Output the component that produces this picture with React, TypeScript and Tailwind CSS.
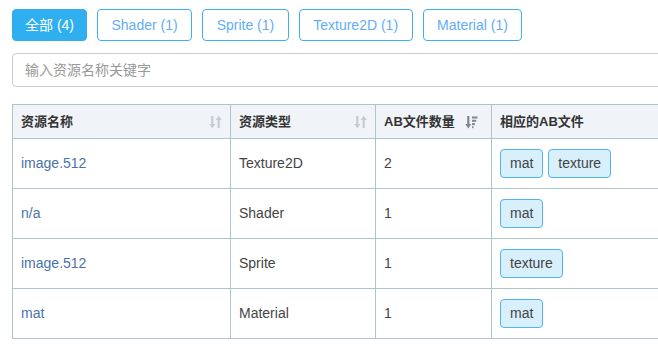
import React from "react";

const filters = [
  { label: "全部 (4)", active: true },
  { label: "Shader (1)" },
  { label: "Sprite (1)" },
  { label: "Texture2D (1)" },
  { label: "Material (1)" },
];

const rows = [
  { name: "image.512", type: "Texture2D", count: 2, files: ["mat", "texture"] },
  { name: "n/a", type: "Shader", count: 1, files: ["mat"] },
  { name: "image.512", type: "Sprite", count: 1, files: ["texture"] },
  { name: "mat", type: "Material", count: 1, files: ["mat"] },
];

function SortBoth() {
  return (
    <svg width="13" height="14" viewBox="0 0 13 14" className="text-[#c5ccd3]">
      {/* down arrow */}
      <rect x="2.2" y="1" width="2.2" height="9" fill="currentColor" />
      <path d="M0.3 9 L6.3 9 L3.3 13.5 Z" fill="currentColor" />
      {/* up arrow */}
      <rect x="8.6" y="4" width="2.2" height="9" fill="currentColor" />
      <path d="M6.7 5 L12.7 5 L9.7 0.5 Z" fill="currentColor" />
    </svg>
  );
}

function SortDesc() {
  return (
    <svg width="13" height="14" viewBox="0 0 13 14" className="text-[#7d8790]">
      <rect x="2.2" y="1" width="2.2" height="9" fill="currentColor" />
      <path d="M0.3 9 L6.3 9 L3.3 13.5 Z" fill="currentColor" />
      <rect x="7" y="1.5" width="5.5" height="2" fill="currentColor" />
      <rect x="7" y="4.8" width="4.2" height="2" fill="currentColor" />
      <rect x="7" y="8.1" width="2.8" height="2" fill="currentColor" />
      <rect x="7" y="11.3" width="1.5" height="1.8" fill="currentColor" />
    </svg>
  );
}

export default function App() {
  return (
    <div
      className="w-[658px] h-[355px] overflow-hidden bg-white text-[#333]"
      style={{ fontFamily: '"Liberation Sans", "Noto Sans CJK SC", sans-serif' }}
    >
      <div className="pl-3 pt-[9px]">
        {/* filter buttons */}
        <div className="flex gap-[10px]">
          {filters.map((f) =>
            f.active ? (
              <button
                key={f.label}
                className="h-8 px-[12px] rounded-[4px] bg-[#30aff0] border border-[#30aff0] text-white text-[14px]"
              >
                {f.label}
              </button>
            ) : (
              <button
                key={f.label}
                className="h-8 px-[13.5px] rounded-[4px] bg-white border border-[#3cb0f0] text-[#63aef6] text-[14px]"
              >
                {f.label}
              </button>
            )
          )}
        </div>

        {/* search */}
        <div className="mt-3 h-[34px] w-[700px] rounded-[4px] border border-[#cccccc] flex items-center px-3 text-[14px] text-[#999]">
          输入资源名称关键字
        </div>

        {/* table */}
        <table className="mt-[17px] w-[720px] border-collapse table-fixed text-[14px]">
          <colgroup>
            <col className="w-[218px]" />
            <col className="w-[145px]" />
            <col className="w-[116px]" />
            <col />
          </colgroup>
          <thead>
            <tr className="bg-[#f0f4f9] h-[34px]">
              <th className="border border-[#afc3c8] px-2 text-left font-bold text-[13px] text-[#333]">
                <div className="flex items-center justify-between">
                  <span>资源名称</span>
                  <SortBoth />
                </div>
              </th>
              <th className="border border-[#afc3c8] px-2 text-left font-bold text-[13px] text-[#333]">
                <div className="flex items-center justify-between">
                  <span>资源类型</span>
                  <SortBoth />
                </div>
              </th>
              <th className="border border-[#afc3c8] px-2 text-left font-bold text-[13px] text-[#333]">
                <div className="flex items-center justify-between pr-[5px]">
                  <span>AB文件数量</span>
                  <SortDesc />
                </div>
              </th>
              <th className="border border-[#afc3c8] px-2 text-left font-bold text-[13px] text-[#333]">
                相应的AB文件
              </th>
            </tr>
          </thead>
          <tbody>
            {rows.map((r, i) => (
              <tr key={i} className="h-[50px]">
                <td className="border border-[#afc3c8] px-2 text-[#4a72ad]">{r.name}</td>
                <td className="border border-[#afc3c8] px-2 text-[#444]">{r.type}</td>
                <td className="border border-[#afc3c8] px-2 text-[#444]">{r.count}</td>
                <td className="border border-[#afc3c8] px-2">
                  <div className="flex gap-[5px]">
                    {r.files.map((f) => (
                      <span
                        key={f}
                        className="h-[29px] px-[9px] flex items-center rounded-[4px] bg-[#d8effc] border border-[#52b4ee] text-[#444]"
                      >
                        {f}
                      </span>
                    ))}
                  </div>
                </td>
              </tr>
            ))}
          </tbody>
        </table>
      </div>
    </div>
  );
}
